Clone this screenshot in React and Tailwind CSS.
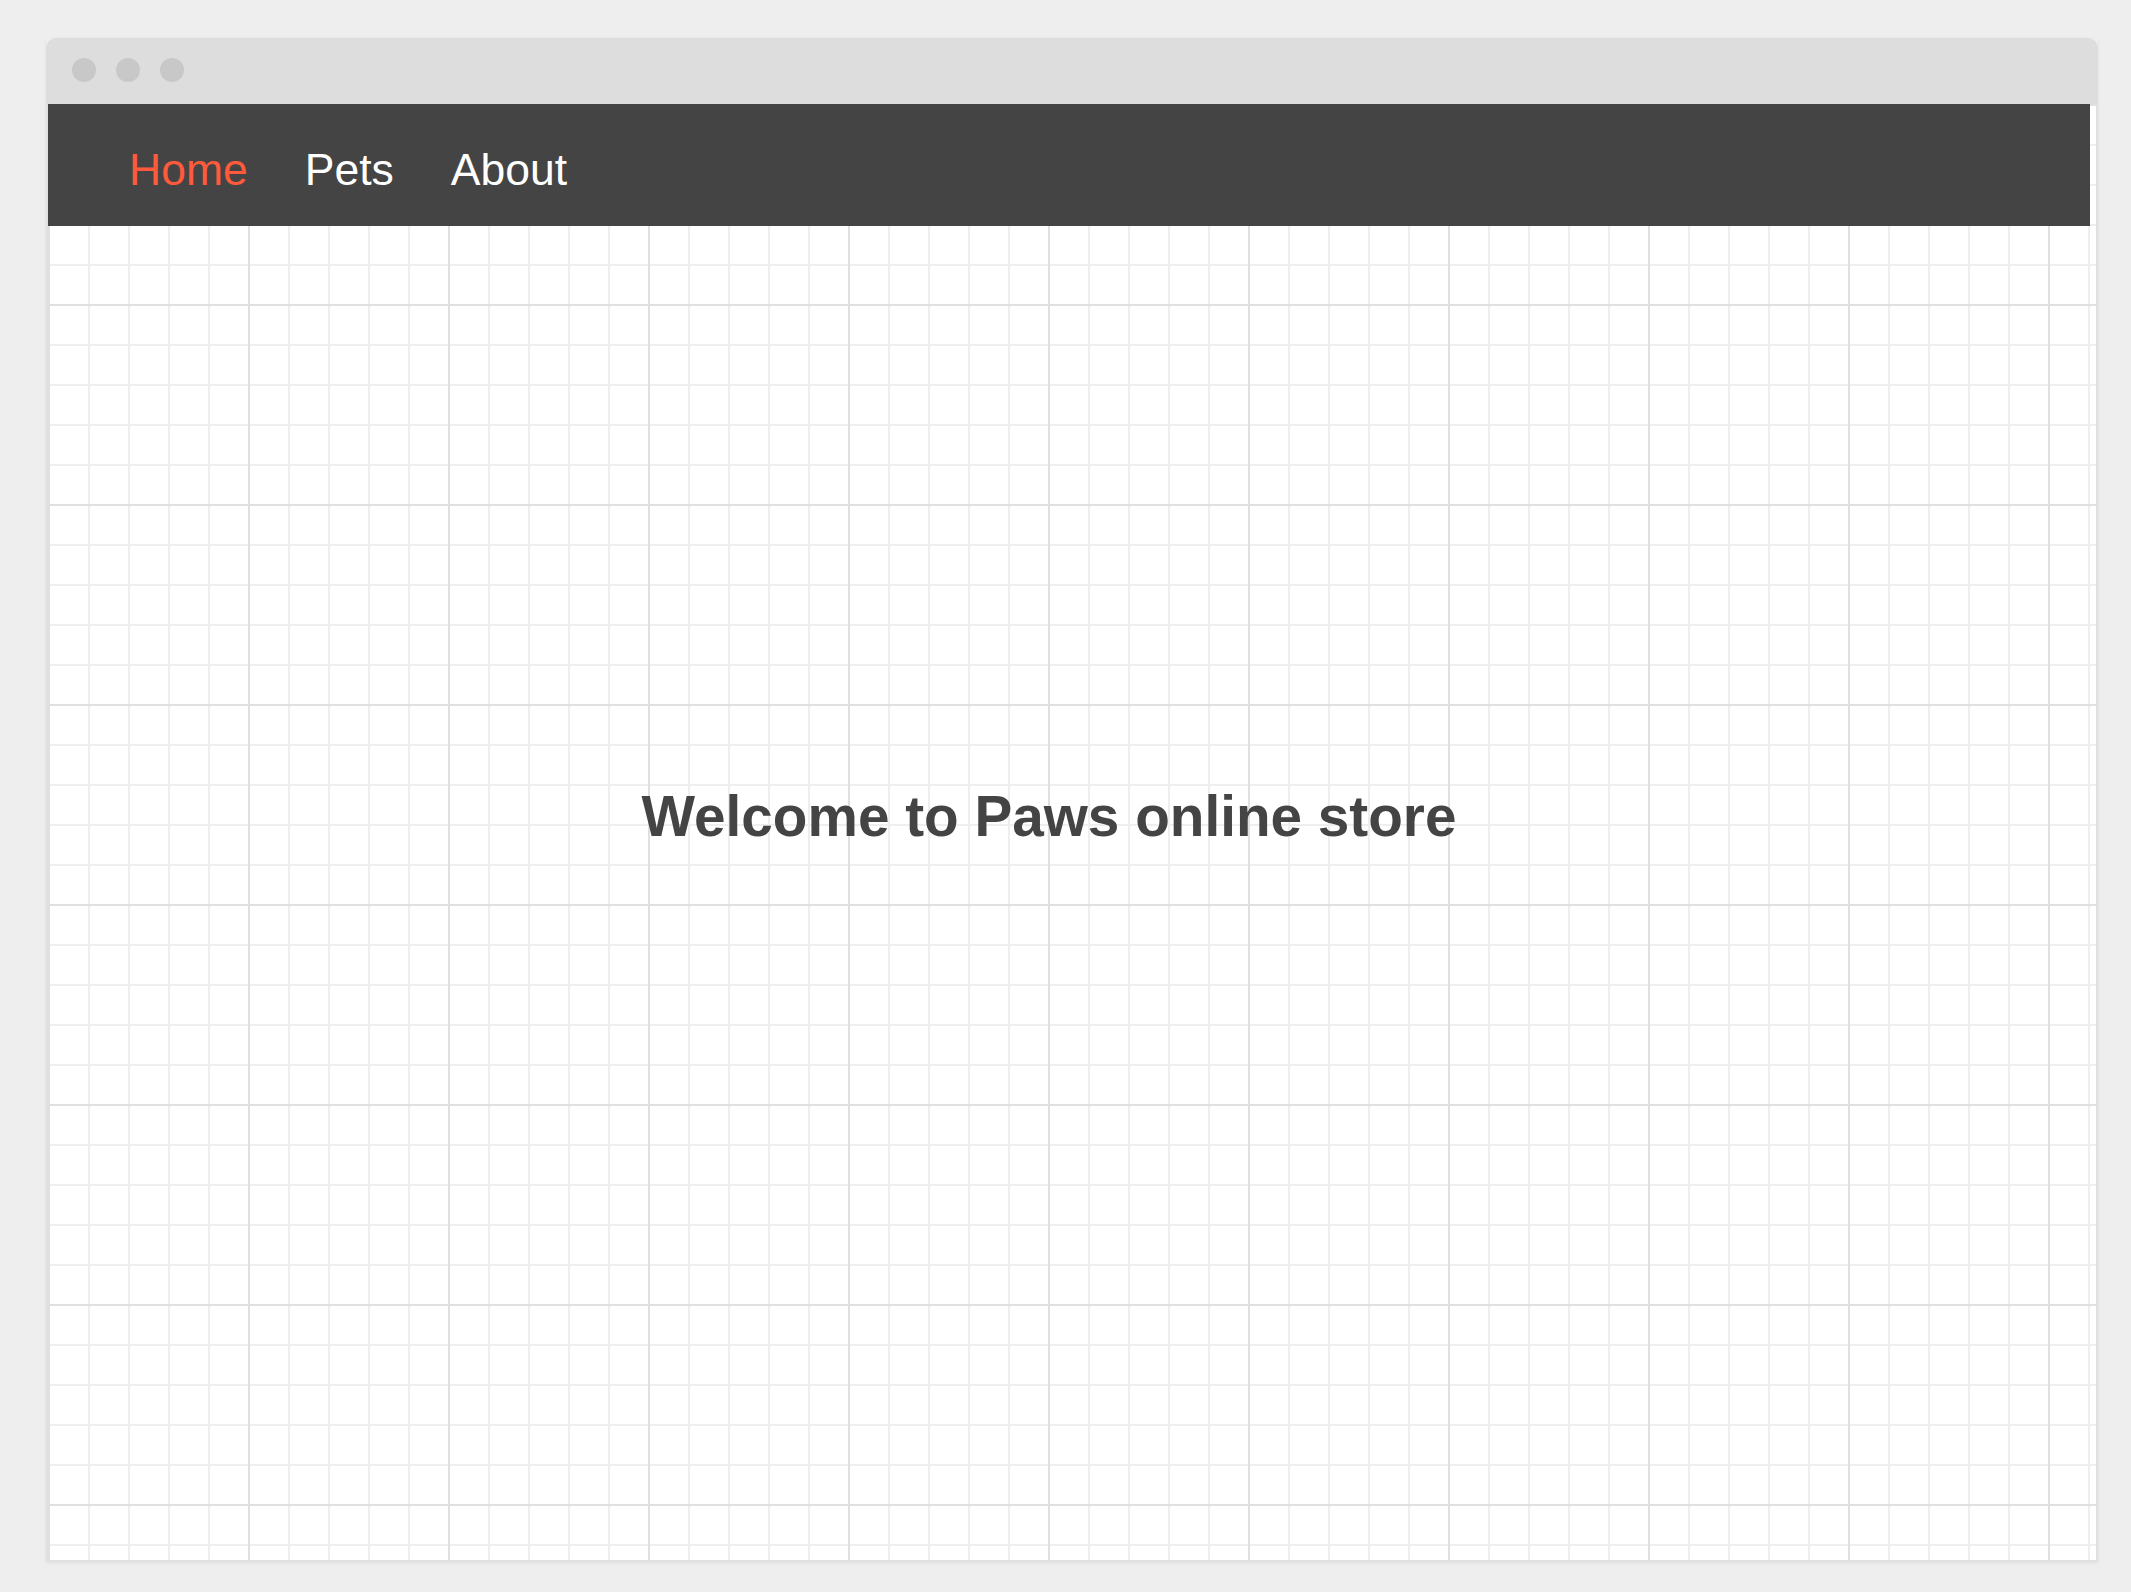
const links = [
  { label: 'Home', active: true },
  { label: 'Pets', active: false },
  { label: 'About', active: false },
]

function TitleBar() {
  return (
    <div className="flex h-[66px] items-start gap-[20px] rounded-t-[10px] bg-[#dddddd] pl-[26px] pt-[20px]">
      <span className="h-[24px] w-[24px] rounded-full bg-[#c8c8c8]"></span>
      <span className="h-[24px] w-[24px] rounded-full bg-[#c8c8c8]"></span>
      <span className="h-[24px] w-[24px] rounded-full bg-[#c8c8c8]"></span>
    </div>
  )
}

function NavBar() {
  return (
    <nav className="mr-[6px] flex h-[122px] items-start gap-[57px] bg-[#444444] pl-[81px] pt-[41px]">
      {links.map((link) => (
        <a
          key={link.label}
          href="#"
          className={`text-[44.5px] leading-[49px] ${link.active ? 'text-[#ff5a3c]' : 'text-white'}`}
        >
          {link.label}
        </a>
      ))}
    </nav>
  )
}

export default function App() {
  return (
    <div className="min-h-[1592px] bg-[#eeeeee] pl-[46px] pt-[38px] font-['Liberation_Sans',Arial,sans-serif]">
      <div className="w-[2052px] shadow-[0_1px_4px_rgba(0,0,0,0.06)]">
        <TitleBar />
        {/* body with graph paper background */}
        <div className="h-[1458px] border-x-2 border-b-2 border-[#e0e0e0] bg-white bg-[linear-gradient(to_right,#e0e0e0_2px,transparent_2px),linear-gradient(to_bottom,#e0e0e0_2px,transparent_2px),linear-gradient(to_right,#eeeeee_2px,transparent_2px),linear-gradient(to_bottom,#eeeeee_2px,transparent_2px)] bg-[size:200px_200px,200px_200px,40px_40px,40px_40px]">
          <NavBar />
          <main className="pr-[46px] pt-[559px] text-center">
            <h1 className="text-[56.7px] font-bold leading-[64px] text-[#444444]">
              Welcome to Paws online store
            </h1>
          </main>
        </div>
      </div>
    </div>
  )
}
